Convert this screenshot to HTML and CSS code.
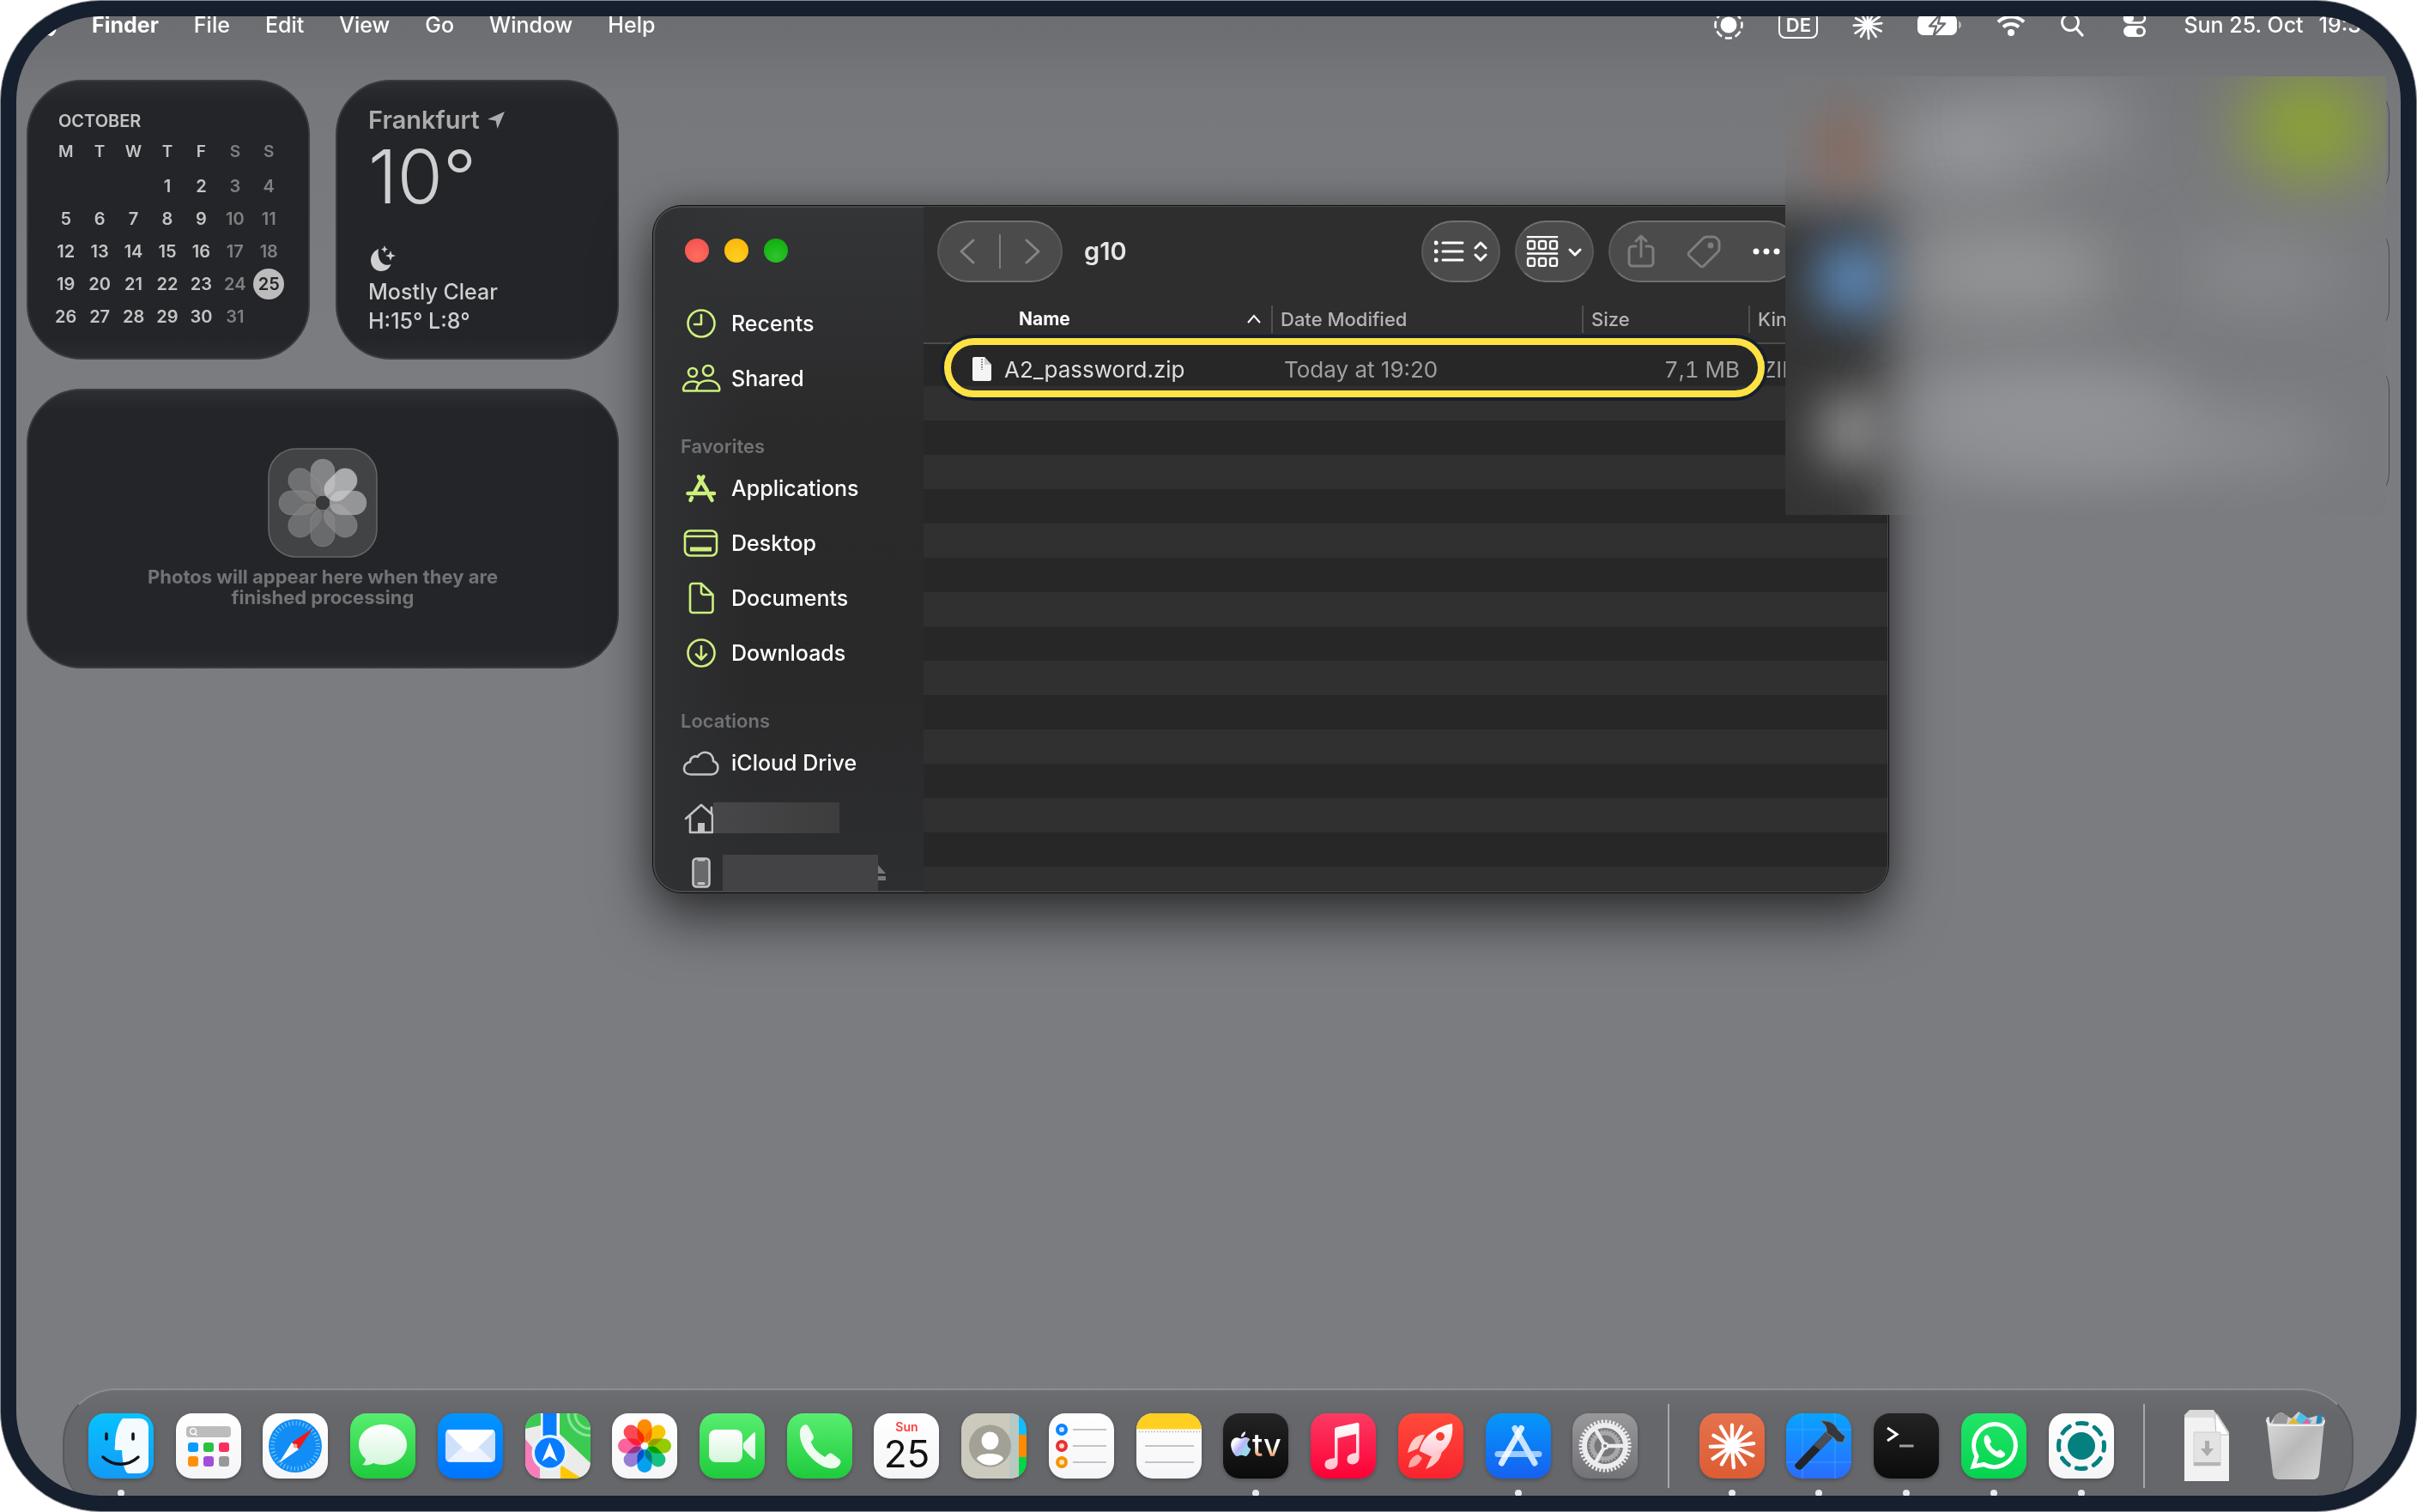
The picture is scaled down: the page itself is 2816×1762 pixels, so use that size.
FILE: index.html
```html
<!DOCTYPE html>
<html lang="en">
<head>
<meta charset="utf-8">
<title>Finder</title>
<link rel="stylesheet" href="styles.css">
</head>
<body>
<svg class="defs" aria-hidden="true">
  <defs>
    <symbol id="burst" viewBox="0 0 60 60"><path d="M30 30V4M30 30 42 6M30 30 53 14M30 30 57 27M30 30 56 42M30 30 46 53M30 30 32 57M30 30 17 53M30 30 6 46M30 30 3 31M30 30 7 17M30 30 16 6" fill="none" stroke="currentColor" stroke-width="4.6" stroke-linecap="round"/></symbol>
    <symbol id="handset" viewBox="0 0 60 60"><path d="M7 8c3-4 7-5 9-1l6 11c1 3 0 5-3 8 3 8 9 14 18 19 3-4 6-6 9-4l9 7c3 3 0 8-4 10-8 4-22-2-32-13C8 34 2 17 7 8z" fill="currentColor"/></symbol>
    <symbol id="apple" viewBox="0 0 24 30"><path d="M12.300 8.500c2-.1 3-1.500 5.500-1.400 2 .1 3.800 1 4.900 2.700-4.500 2.900-3.700 8.900.9 10.700-1 3-3.500 7.500-6 7.500-2 0-2.600-1.200-5-1.200s-3.200 1.200-5 1.200C4 28-.2 20.500.2 15.200.5 10 4 7.300 7 7.200c2.200 0 3.600 1.300 5.300 1.300zM12 6.700C11.800 3.500 14.500.6 17.500.2 17.900 3.600 15 6.700 12 6.700z" fill="currentColor"/></symbol>
    <linearGradient id="white-fade" x1="0" y1="0" x2="0" y2="1"><stop offset="0" stop-color="#fff"/><stop offset="1" stop-color="#d4f6da"/></linearGradient>
    <linearGradient id="pink-fade" x1="0" y1="0" x2="0" y2="1"><stop offset="0" stop-color="#fff"/><stop offset="1" stop-color="#ffc3cf"/></linearGradient>
    <linearGradient id="rainbow" x1="0" y1="0" x2="1" y2="1"><stop offset=".3" stop-color="#fff"/><stop offset=".55" stop-color="#b9b5f5"/><stop offset=".8" stop-color="#8fe0ea"/><stop offset="1" stop-color="#d8b4f0"/></linearGradient>
    <linearGradient id="tv-fade" x1="0" y1="0" x2="0" y2="1"><stop offset=".5" stop-color="#fff"/><stop offset=".72" stop-color="#e9c08a"/><stop offset=".8" stop-color="#f08080"/></linearGradient>
    <linearGradient id="bin" x1="0" y1="0" x2="1" y2="1"><stop offset="0" stop-color="#dcdcdc"/><stop offset=".5" stop-color="#b9b9b9"/><stop offset="1" stop-color="#d6d6d6"/></linearGradient>
    <clipPath id="tile"><rect width="76" height="76" rx="19"/></clipPath>
  </defs>
</svg>

<div class="desktop">
  <header class="menubar">
    <nav class="menus" aria-label="Menu bar">
      <button class="menu-item" aria-label="Apple"><svg width="24" height="30"><use href="#apple"/></svg></button>
      <button class="menu-item menu-app">Finder</button>
      <button class="menu-item">File</button>
      <button class="menu-item">Edit</button>
      <button class="menu-item">View</button>
      <button class="menu-item">Go</button>
      <button class="menu-item">Window</button>
      <button class="menu-item">Help</button>
    </nav>
    <div class="status">
      <svg width="36" height="36" viewBox="0 0 36 36"><circle cx="18" cy="18" r="9.500" fill="#fff"/><circle cx="18" cy="18" r="15.500" fill="none" stroke="#fff" stroke-width="2.600" stroke-dasharray="8.200 3.970" stroke-dashoffset="4.100"/></svg>
      <span class="input-source">DE</span>
      <svg width="36" height="36"><use href="#burst"/></svg>
      <svg width="52" height="28" viewBox="0 0 52 28"><rect x="0" y="2" width="46" height="24" rx="7" fill="#fff"/><path d="M48 9.500c4 1 4 8 0 9z" fill="#b9b9bb"/><path d="M27 1 14 15.500h8L18.500 27 32 12.500h-8z" fill="#fff" stroke="#6c6d70" stroke-width="2.400" stroke-linejoin="round"/></svg>
      <svg width="34" height="26" viewBox="0 0 34 26"><path d="M2 9.500a21.500 21.500 0 0 1 30 0M8 15.500a13 13 0 0 1 18 0" fill="none" stroke="#fff" stroke-width="4"/><circle cx="17" cy="22" r="4" fill="#fff"/></svg>
      <svg width="32" height="28" viewBox="0 0 32 28"><circle cx="12" cy="11" r="9.500" fill="none" stroke="#fff" stroke-width="2.800"/><path d="m19 18 7 8" stroke="#fff" stroke-width="3.200" stroke-linecap="round"/></svg>
      <svg width="32" height="30" viewBox="0 0 32 30"><rect x="3" y="1.500" width="24" height="11" rx="5.500" fill="none" stroke="#fff" stroke-width="2.600"/><circle cx="9" cy="7" r="5" fill="#fff"/><rect x="2" y="16" width="26" height="13" rx="6.500" fill="#fff"/><circle cx="21" cy="22.500" r="4" fill="#6f7073"/></svg>
      <time class="clock"><span>Sun 25. Oct</span><span>19:3</span></time>
    </div>
  </header>

  <main class="space">
    <section class="widgets" aria-label="Widgets">
      <article class="widget calendar">
        <table>
          <caption>OCTOBER</caption>
          <thead><tr><th>M</th><th>T</th><th>W</th><th>T</th><th>F</th><th class="off">S</th><th class="off">S</th></tr></thead>
          <tbody>
            <tr><td></td><td></td><td></td><td>1</td><td>2</td><td class="off">3</td><td class="off">4</td></tr>
            <tr><td>5</td><td>6</td><td>7</td><td>8</td><td>9</td><td class="off">10</td><td class="off">11</td></tr>
            <tr><td>12</td><td>13</td><td>14</td><td>15</td><td>16</td><td class="off">17</td><td class="off">18</td></tr>
            <tr><td>19</td><td>20</td><td>21</td><td>22</td><td>23</td><td class="off">24</td><td><span class="today">25</span></td></tr>
            <tr><td>26</td><td>27</td><td>28</td><td>29</td><td>30</td><td class="off">31</td><td></td></tr>
          </tbody>
        </table>
      </article>
      <article class="widget weather">
        <h2>Frankfurt <svg width="22" height="22" viewBox="0 0 22 22"><path d="M21 1 12.500 21l-1.800-9.200L1 10z" fill="currentColor"/></svg></h2>
        <p class="temp">10°</p>
        <svg class="moon" width="32" height="32" viewBox="0 0 32 32"><path d="M10 5C4 8 1 13 1 18c0 7 5 13 12 13 5 0 10-3 11.500-8-3 1.500-8 1-11-2C10 17 9 11 10 5z" fill="currentColor"/><path d="m17 1 1.200 3.300L21 5.500l-2.800 1.200L17 10l-1.200-3.300L13 5.500l2.800-1.200zM24 7l1.600 4.400L30 13l-4.400 1.600L24 19l-1.600-4.400L18 13l4.400-1.600z" fill="currentColor"/></svg>
        <p>Mostly Clear</p>
        <p>H:15° L:8°</p>
      </article>
      <article class="widget photos">
        <svg class="photos-icon" width="128" height="128" viewBox="0 0 128 128">
          <rect x="1" y="1" width="126" height="126" rx="32" fill="#424345" stroke="#66676a" stroke-width="1.500"/>
          <g stroke="#a0a0a0" stroke-opacity=".35">
            <rect x="50" y="13" width="28" height="43" rx="14" fill="#a0a0a2" fill-opacity=".7"/>
            <rect x="50" y="13" width="28" height="43" rx="14" fill="#838385" fill-opacity=".7" transform="rotate(315 64 64)"/>
            <rect x="50" y="13" width="28" height="43" rx="14" fill="#838385" fill-opacity=".7" transform="rotate(270 64 64)"/>
            <rect x="50" y="13" width="28" height="43" rx="14" fill="#808082" fill-opacity=".7" transform="rotate(225 64 64)"/>
            <rect x="50" y="13" width="28" height="43" rx="14" fill="#7a7a7c" fill-opacity=".7" transform="rotate(180 64 64)"/>
            <rect x="50" y="13" width="28" height="43" rx="14" fill="#8c8c8e" fill-opacity=".7" transform="rotate(135 64 64)"/>
            <rect x="50" y="13" width="28" height="43" rx="14" fill="#b0b0b2" fill-opacity=".75" transform="rotate(90 64 64)"/>
            <rect x="50" y="13" width="28" height="43" rx="14" fill="#cdcdcf" fill-opacity=".75" transform="rotate(45 64 64)"/>
          </g>
          <circle cx="64" cy="64" r="8" fill="#38393b"/>
        </svg>
        <p>Photos will appear here when they are finished processing</p>
      </article>
    </section>
  </main>

  <section class="window" aria-label="g10">
    <aside class="sidebar">
      <div class="lights">
        <button class="light close" aria-label="Close"></button>
        <button class="light minimise" aria-label="Minimise"></button>
        <button class="light zoom" aria-label="Zoom"></button>
      </div>
      <a class="place" href="#recents"><svg viewBox="0 0 48 40"><circle cx="24" cy="20" r="15.500"/><path d="M24 10v11h-8"/></svg>Recents</a>
      <a class="place" href="#shared"><svg viewBox="0 0 48 40"><circle cx="32" cy="11" r="6"/><circle cx="14" cy="13" r="5"/><path d="M20 34.500c-3 0-1.500-12 12-12s15 12 12 12zM17.500 34.500h-13c-3 0-1.500-11 9.500-11 4 0 6 1 7.500 2.500"/></svg>Shared</a>
      <h3 class="group">Favorites</h3>
      <a class="place" href="#applications"><svg viewBox="0 0 48 40"><path stroke-width="4.500" d="M21 6.500 31 23M26.500 6.500 16 25M8.500 26h20M34.500 26H39M31 24l5.500 10M13 31l-1.500 3"/></svg>Applications</a>
      <a class="place" href="#desktop"><svg viewBox="0 0 48 40"><rect x="5" y="5.500" width="37" height="29" rx="6"/><path d="M5 12h37"/><path d="M11 27h25" stroke-width="5" stroke-linecap="butt"/></svg>Desktop</a>
      <a class="place" href="#documents"><svg viewBox="0 0 48 40"><path d="M14 3h10l13.500 13v18a3 3 0 0 1-3 3H14a3 3 0 0 1-3-3V6a3 3 0 0 1 3-3zM24 3v10a3 3 0 0 0 3 3h10"/></svg>Documents</a>
      <a class="place" href="#downloads"><svg viewBox="0 0 48 40"><circle cx="24" cy="20" r="15.500"/><path d="M24 12v15M18 21.500l6 6 6-6"/></svg>Downloads</a>
      <h3 class="group">Locations</h3>
      <a class="place place-device" href="#icloud"><svg viewBox="0 0 48 40"><path d="M12 33.500C1 33.500 2 20 11 19c0-5 5-8 9-6 4-8 18-7 18 5 8 3 7 15-2 15.500z"/></svg>iCloud Drive</a>
      <a class="place place-device" href="#home" aria-label="Home"><svg viewBox="0 0 48 40"><path d="M6 21 24 5l18 16M11 18v19h26V18M36 15V8"/><path d="M20 26h8v11h-8z" fill="currentColor" stroke="none"/></svg><span class="mask mask-home"></span></a>
      <a class="place place-device" href="#phone" aria-label="Phone"><svg viewBox="0 0 48 40"><rect x="14.500" y="3.500" width="19" height="33" rx="4" fill="#68696b"/><path d="M21 5h6M21 32.500h6" stroke-width="3"/></svg><span class="mask mask-phone"></span><svg class="eject" viewBox="0 0 9 18"><path d="M0 0 9 10H0zM0 13h9v5H0z"/></svg></a>
    </aside>

    <div class="content">
      <div class="toolbar">
        <div class="pill history">
          <button aria-label="Back"><svg width="18" height="30" viewBox="0 0 18 30"><path d="M16 2 2 15l14 13"/></svg></button>
          <span class="rule"></span>
          <button aria-label="Forward"><svg width="18" height="30" viewBox="0 0 18 30"><path d="m2 2 14 13L2 28"/></svg></button>
        </div>
        <h1>g10</h1>
        <button class="pill view" aria-label="View as list"><svg width="62" height="36" viewBox="0 0 62 36"><path d="M10 8h23M10 18h23M10 28h23"/><path d="M2 8h.1M2 18h.1M2 28h.1" stroke-width="5"/><path d="m48 14 6-6 6 6M48 22l6 6 6-6"/></svg></button>
        <button class="pill view" aria-label="Group"><svg width="66" height="36" viewBox="0 0 66 36"><path d="M2 1h34M2 20.500h34" stroke-width="2.600"/><g stroke-width="2.400"><rect x="2" y="6" width="8" height="9" rx="2"/><rect x="15" y="6" width="8" height="9" rx="2"/><rect x="28" y="6" width="8" height="9" rx="2"/><rect x="2" y="26" width="8" height="9" rx="2"/><rect x="15" y="26" width="8" height="9" rx="2"/><rect x="28" y="26" width="8" height="9" rx="2"/></g><path d="m51 16 6 6 6-6"/></svg></button>
        <div class="pill actions">
          <button class="dim" aria-label="Share"><svg width="32" height="40" viewBox="0 0 32 40"><path d="M16 26V3M10 8l6-6 6 6M10 14H6a4 4 0 0 0-4 4v15a4 4 0 0 0 4 4h20a4 4 0 0 0 4-4V18a4 4 0 0 0-4-4h-4"/></svg></button>
          <button class="dim" aria-label="Tags"><svg width="40" height="40" viewBox="0 0 40 40"><path d="M24 3h8c2 0 6 4 6 6v8c0 2-1 3-2 4L20 37c-1 1-3 1-4 0L3 25c-1-1-1-3 0-4L19 5c1-1 3-2 5-2z"/><circle cx="28" cy="13" r="2" fill="currentColor"/></svg></button>
          <button aria-label="More"><svg width="32" height="8" viewBox="0 0 32 8"><g fill="currentColor" stroke="none"><circle cx="4" cy="4" r="3.500"/><circle cx="16" cy="4" r="3.500"/><circle cx="28" cy="4" r="3.500"/></g></svg></button>
        </div>
      </div>
      <table class="files">
        <colgroup><col class="col-name"><col class="col-date"><col class="col-size"><col></colgroup>
        <thead><tr>
          <th class="name"><div><span>Name</span><svg width="18" height="12" viewBox="0 0 18 12"><path d="m2 10 7-8 7 8"/></svg></div></th>
          <th><div>Date Modified</div></th>
          <th><div>Size</div></th>
          <th><div>Kind</div></th>
        </tr></thead>
        <tbody><tr>
          <td class="file"><div><svg width="24" height="30" viewBox="0 0 24 30"><path d="M3 1h12l8 9v17a2 2 0 0 1-2 2H3a2 2 0 0 1-2-2V3a2 2 0 0 1 2-2z" fill="#f4f4f4"/><path d="M15 1v9h8z" fill="#cfcfcf"/><path d="M12 3v13" stroke="#999" stroke-width="2" stroke-dasharray="2 1"/></svg>A2_password.zip</div></td>
          <td class="date">Today at 19:20</td>
          <td class="size">7,1 MB</td>
          <td class="kind">ZIP</td>
        </tr></tbody>
      </table>
    </div>
    <div class="highlight"></div>
  </section>

  <section class="notices" aria-label="Notifications">
    <div class="notice"></div>
    <div class="notice"></div>
    <div class="notice notice-tall"></div>
    <div class="haze"><i class="b-dark"></i><i class="b-brown"></i><i class="b-text1"></i><i class="b-text1b"></i><i class="b-green"></i><i class="b-blue"></i><i class="b-text2"></i><i class="b-text2b"></i><i class="b-gray"></i><i class="b-text3"></i><i class="b-text4"></i></div>
  </section>

  <nav class="dock" aria-label="Dock">
    <button class="app finder running" aria-label="Finder"><svg viewBox="0 0 76 76"><path d="M40 6h20a10 10 0 0 1 10 10v44a10 10 0 0 1-10 10H46c-4-3-6-10-7-27h-6c-2 0-3-1-2-5 0-14 3-25 9-32z" fill="#f4fbff"/><path d="M21 24v6M52 24v6" stroke="#10131a" stroke-width="3.600" stroke-linecap="round"/><path d="M17 51c12 11 29 11 41 0" fill="none" stroke="#10131a" stroke-width="3.400" stroke-linecap="round"/></svg></button>
    <button class="app paper" aria-label="Apps"><svg viewBox="0 0 76 76"><rect x="12" y="15" width="52" height="13" rx="4" fill="#bcbcbd"/><circle cx="20" cy="21" r="3.500" fill="none" stroke="#fff" stroke-width="1.500"/><path d="m22.500 24 2 2" stroke="#fff" stroke-width="1.500"/><rect x="14" y="34" width="12" height="11" rx="3" fill="#0a9bff"/><rect x="32" y="34" width="12" height="11" rx="3" fill="#2cc144"/><rect x="50" y="34" width="12" height="11" rx="3" fill="#fb2f5d"/><rect x="14" y="50" width="12" height="12" rx="3" fill="#ff900e"/><rect x="32" y="50" width="12" height="12" rx="3" fill="#a24fd8"/><rect x="50" y="50" width="12" height="12" rx="3" fill="#98989a"/></svg></button>
    <button class="app paper" aria-label="Safari"><svg viewBox="0 0 76 76"><circle cx="38" cy="38" r="31" fill="#128df5"/><circle cx="38" cy="38" r="26.500" fill="none" stroke="#7fd0ff" stroke-width="5" stroke-dasharray="1 3.160"/><path d="M58 18 34 34l8 8z" fill="#f01818"/><path d="m19 58 15-24 8 8z" fill="#fff"/><circle cx="38" cy="38" r="2.500" fill="#f7a0a0"/></svg></button>
    <button class="app green" aria-label="Messages"><svg viewBox="0 0 76 76"><path d="M38 13c16 0 28 10 28 23.500S54 60 38 60c-4 0-8-.7-11-2-3 2-8 3-13 2 3-2 4-5 4-7-5-4-8-10-8-16.500C10 23 22 13 38 13z" fill="url(#white-fade)"/></svg></button>
    <button class="app mail" aria-label="Mail"><svg viewBox="0 0 76 76"><rect x="9" y="19" width="58" height="38" rx="5" fill="#cfe0fb"/><path d="m11 56 20-19h14l20 19z" fill="#eef4ff"/><path d="M10 21c1-2 2-2 4-2h48c2 0 3 0 4 2L44 43c-4 3-8 3-12 0z" fill="#fff"/></svg></button>
    <button class="app maps" aria-label="Maps"><svg viewBox="0 0 76 76"><g clip-path="url(#tile)"><path d="M0 0h76v76H0z" fill="#ebebea"/><path d="M0 0h18v14L0 18zM40 0h36v58L40 24z" fill="#3ccb52"/><circle cx="76" cy="0" r="26" fill="none" stroke="#8ae498" stroke-width="3"/><circle cx="76" cy="0" r="18" fill="none" stroke="#8ae498" stroke-width="3"/><path d="M0 30 17 50v26H0z" fill="#f77cba"/><path d="M41 60 66 76H41z" fill="#fcc803"/><path d="M18 0h22v40H18z" fill="#fff"/><path d="M20.500 0h16v40h-16z" fill="#0a7cff"/></g><circle cx="28.500" cy="46" r="21" fill="#e8f3fb"/><circle cx="28.500" cy="46" r="17.500" fill="#087bff"/><path d="m28.500 34 9 22-9-6-9 6z" fill="#fff"/></svg></button>
    <button class="app paper" aria-label="Photos"><svg viewBox="0 0 76 76"><g class="petals"><rect x="29.500" y="7" width="17" height="27" rx="8.500" fill="#ff8c00"/><rect x="29.500" y="7" width="17" height="27" rx="8.500" fill="#fcc800" transform="rotate(45 38 38)"/><rect x="29.500" y="7" width="17" height="27" rx="8.500" fill="#98cf00" transform="rotate(90 38 38)"/><rect x="29.500" y="7" width="17" height="27" rx="8.500" fill="#14c785" transform="rotate(135 38 38)"/><rect x="29.500" y="7" width="17" height="27" rx="8.500" fill="#05a5f5" transform="rotate(180 38 38)"/><rect x="29.500" y="7" width="17" height="27" rx="8.500" fill="#9a80dd" transform="rotate(225 38 38)"/><rect x="29.500" y="7" width="17" height="27" rx="8.500" fill="#ff65a0" transform="rotate(270 38 38)"/><rect x="29.500" y="7" width="17" height="27" rx="8.500" fill="#ff4a55" transform="rotate(315 38 38)"/></g></svg></button>
    <button class="app green" aria-label="FaceTime"><svg viewBox="0 0 76 76"><rect x="11" y="19" width="39" height="38" rx="8" fill="url(#white-fade)"/><path d="M51 35c4-4 8-9 12-12 1-1 2-1 2 0v30c0 1-1 1-2 0-4-3-8-8-12-12z" fill="url(#white-fade)"/></svg></button>
    <button class="app green phone" aria-label="Phone"><svg viewBox="0 0 76 76"><use href="#handset" x="10" y="9" width="56" height="56"/></svg></button>
    <button class="app paper cal" aria-label="Calendar"><span class="cal-day">Sun</span><span class="cal-date">25</span></button>
    <button class="app" aria-label="Contacts"><svg viewBox="0 0 76 76"><g clip-path="url(#tile)"><path d="M0 0h67v76H0z" fill="#cbcabd"/><path d="M67 0h9v25h-9z" fill="#10bdff"/><path d="M67 25h9v26h-9z" fill="#ff8a00"/><path d="M67 51h9v25h-9z" fill="#04d648"/><path d="M56 0h11v76H56z" fill="#b9c8c2"/></g><circle cx="33.500" cy="38" r="24.500" fill="#a3a195"/><ellipse cx="33.500" cy="32" rx="10" ry="10.500" fill="#fff"/><path d="M18 53c2-8 29-8 31 0-8 10-23 10-31 0z" fill="#fff"/></svg></button>
    <button class="app paper" aria-label="Reminders"><svg viewBox="0 0 76 76"><g stroke-width="4"><circle cx="15" cy="19" r="5" fill="#cfe5ff" stroke="#0a84ff"/><circle cx="15" cy="38" r="5" fill="#fad2d2" stroke="#e83030"/><circle cx="15" cy="57" r="5" fill="#fde3b5" stroke="#f59300"/></g><path d="M28 19h39M28 38h39M28 57h39" stroke="#c4c4c6" stroke-width="2"/></svg></button>
    <button class="app paper" aria-label="Notes"><svg viewBox="0 0 76 76"><path d="M0 18.500h76V0H0z" fill="#ffd021" clip-path="url(#tile)"/><path d="M3 21.500h72" stroke="#b0b0b0" stroke-width="1.500" stroke-dasharray="1.500 2"/><path d="M10 38h57M10 57h57" stroke="#c4c4c6" stroke-width="2"/></svg></button>
    <button class="app black running" aria-label="TV"><svg viewBox="0 0 76 76"><path transform="translate(9 21)" d="M12 8.500c2-.1 3-1.500 5.500-1.400 2 .1 3.800 1 4.900 2.700-4.500 2.900-3.700 8.900.9 10.700-1 3-3.500 8.500-6 8.500-2 0-2.600-1.200-5-1.200S9.300 29 7.500 29C4 29-.2 20.500.2 15.200.5 10 4 7.300 7 7.200c2.200 0 3.600 1.300 5 1.300zM12 6.700C11.800 3.500 14.500.6 17 .2c.4 3.400-2 6.500-5 6.500z" fill="url(#rainbow)"/><text x="34" y="50" class="tv" fill="url(#tv-fade)">tv</text></svg></button>
    <button class="app music" aria-label="Music"><svg viewBox="0 0 76 76"><path d="M28 19c0-2 1-2.500 3-3l23-5c2-.4 2.500.5 2.500 2v39c0 9-14 10-14 2 0-6 5-7 10.500-8V24l-21.500 5v29c0 9-15 10-15 2 0-6 5-7 11.500-8z" fill="url(#pink-fade)"/></svg></button>
    <button class="app rocket" aria-label="Rocket"><svg viewBox="0 0 76 76"><path d="M63 12c2 18-5 30-21 40L25 44c2-16 20-29 38-32z" fill="url(#pink-fade)"/><circle cx="49" cy="27" r="5" fill="#f4402f"/><path d="M31 25c-12 0-17 8-20 21l12-5zM51 41c0 11-6 19-19 24l6-13z" fill="#ffc9c6"/><path d="M23 48c-6 2-10 6-11 15 5 0 12-2 16-11z" fill="#ffa9a5"/></svg></button>
    <button class="app store running" aria-label="App Store"><svg viewBox="0 0 76 76"><g fill="none" stroke-linecap="round" stroke-width="7"><path d="M14 47.500h48" stroke="#9dcbff"/><path d="M34 17.500 57 58" stroke="#c8e2ff"/><path d="M41.500 17.500 18.500 58" stroke="#fff" stroke-opacity=".85"/></g></svg></button>
    <button class="app settings" aria-label="System Settings"><svg viewBox="0 0 76 76"><circle cx="38" cy="38" r="28.500" fill="none" stroke="#efeff1" stroke-width="4" stroke-dasharray="2.300 2.175"/><circle cx="38" cy="38" r="24" fill="#77777b" stroke="#ececee" stroke-width="6"/><circle cx="38" cy="38" r="15" fill="none" stroke="#a9a9ac" stroke-width="5"/><circle cx="38" cy="38" r="18" fill="none" stroke="#a9a9ac" stroke-width="2.500" stroke-dasharray="1.800 1.970"/><path d="M38 38h23M38 38 26.500 18M38 38 26.500 58" stroke="#ececee" stroke-width="4.500"/><circle cx="38" cy="38" r="4.500" fill="#ececee"/><circle cx="38" cy="38" r="2" fill="#77777b"/></svg></button>
    <span class="dock-rule"></span>
    <button class="app claude running" aria-label="Claude"><svg viewBox="0 0 76 76"><use href="#burst" x="10" y="10" width="56" height="56"/></svg></button>
    <button class="app xcode running" aria-label="Xcode"><svg viewBox="0 0 76 76"><path d="M0 19h76M0 57h76M19 0v76M57 0v76" stroke="#5fb4ff" stroke-opacity=".5"/><path d="m46 22 8 6-36 37c-3 2-8-1-8-5z" fill="#23252b"/><path d="m46 22 8 6-14 15-8-6z" fill="#4b4e56"/><path d="M40 9c11-1 17 3 20 10l5 5 4 3-3 7-7-1-3-4-9-6c1-6-1-10-7-14z" fill="#34373e" stroke="#767b84"/></svg></button>
    <button class="app black running" aria-label="Terminal"><svg viewBox="0 0 76 76"><path d="m16 17 11 7.500L16 32" fill="none" stroke="#fff" stroke-width="3"/><path d="M30 38h16.500" stroke="#a0a0a0" stroke-width="3"/></svg></button>
    <button class="app green whatsapp running" aria-label="WhatsApp"><svg viewBox="0 0 76 76"><path d="M38.500 12.500a25 25 0 1 1-12 47L14 62l4-12a25 25 0 0 1 20.500-37.500z" fill="none" stroke="#fff" stroke-width="5"/><use href="#handset" x="24" y="23" width="29" height="29"/></svg></button>
    <button class="app paper running" aria-label="Recorder"><svg viewBox="0 0 76 76"><circle cx="38" cy="38" r="16" fill="#04807f"/><circle cx="38" cy="38" r="26.500" fill="none" stroke="#04807f" stroke-width="5" stroke-dasharray="11 9.813" stroke-dashoffset="5.500" stroke-linecap="round"/></svg></button>
    <span class="dock-rule"></span>
    <button class="app bare" aria-label="Downloads"><svg viewBox="0 0 76 76"><path d="M17-4h28l4 6v-2l14 22v57H11V2l3-3z" fill="#dadada"/><path d="M11 5h33l19 20v54H11z" fill="#f2f2f2"/><path d="M47-1c0 12 0 22 2 26h14z" fill="#fff" stroke="#bdbdbd"/><path d="M22 22h31v39H22z" fill="#e3e3e4" stroke="#cfcfd0"/><path d="M22 57h31v4H22z" fill="#b5b5b6"/><path d="M35 32h5v9h5l-7.500 9-7.500-9h5z" fill="#ababad"/></svg></button>
    <button class="app bare" aria-label="Trash"><svg viewBox="0 0 76 76"><path d="M14 4c4-6 10-6 12-2l8 4 8-8 10 8 14-4 2 12H8z" fill="#d0d0d2"/><path d="m14 4 6-5 10 4-2 10H12z" fill="#98989b"/><path d="m36 13 8-14 14 10-6 6z" fill="#4cc0e8"/><path d="m30 12 6-7 8 8z" fill="#e8b62c"/><path d="m46 12 6-6 5 7z" fill="#ea5f9a"/><path d="M64 2h6v12h-8z" fill="#2386b8"/><path d="M5 10c-2-3 0-6 3-6 0 6 0 8 4 8h53c4 0 5-3 4-8 3 0 4 2 3 6l-6 60c-1 5-3 7-7 7H19c-4 0-6-2-7-7z" fill="url(#bin)"/><path d="M5 8c1 5 3 6 6 6h56c3 0 5-2 5-6" fill="none" stroke="#f0f0f0" stroke-width="2"/></svg></button>
  </nav>
</div>
<div class="bezel" aria-hidden="true"></div>
</body>
</html>
```
FILE: styles.css
```css
* { box-sizing: border-box; }

body {
  margin: 0;
  background: #fff;
  font-family: Inter, "Liberation Sans", sans-serif;
  font-size: 25px;
  color: #fff;
  overflow: hidden;
}

h1, h2, h3, p { margin: 0; }
button { padding: 0; border: 0; background: none; color: inherit; font: inherit; }
svg { display: block; flex: none; }
a { color: inherit; text-decoration: none; }
.defs { position: absolute; width: 0; height: 0; }

.desktop {
  position: relative;
  display: flex;
  flex-direction: column;
  min-height: 100vh;
  background: linear-gradient(#6b6c6f 0, #6f7073 50px, #77787b 110px, #7b7c80 400px, #7b7c80 100%);
}

.bezel {
  position: fixed;
  inset: 1px;
  border: 18px solid #161f2e;
  border-radius: 116px;
  box-shadow: 0 0 0 1px #8b8d92, 0 0 0 120px #fff;
  pointer-events: none;
}

/* Menu bar */
.menubar { display: flex; justify-content: space-between; height: 58px; padding: 0 65px 0 42px; font-weight: 500; }
.menus { display: flex; align-items: center; gap: 41px; }
.status { display: flex; align-items: center; gap: 40px; }
.menubar .menu-app { font-weight: 700; }
.input-source {
  width: 46px; height: 32px;
  border: 2px solid #fff; border-radius: 8px;
  font-size: 22px; font-weight: 600; line-height: 29px; text-align: center;
}
.clock { display: flex; gap: 18px; white-space: nowrap; }

/* Widgets */
.space { flex: 1; padding: 35px 31px; }
.widgets { display: grid; grid-template-columns: 330px 330px; gap: 34px 30px; }
.widget {
  height: 326px;
  border: 2px solid #3a3b3e;
  border-radius: 64px;
  background: linear-gradient(#2d2e31, #242528 24px, #242528 300px, #2a2b2e);
}
.calendar { padding: 32px 0 0 24px; }
.calendar table { width: 276px; table-layout: fixed; border-collapse: collapse; font-size: 20px; font-weight: 600; color: #c4c4c6; text-align: center; }
.calendar caption { padding-left: 11px; text-align: left; font-size: 20px; line-height: 29px; }
.calendar th, .calendar td { height: 38px; padding: 0; font-weight: 600; line-height: 36px; }
.calendar thead th { height: 42px; font-size: 19px; }
.calendar .off { color: #7f8082; }
.today { display: inline-block; width: 36px; height: 36px; border-radius: 50%; background: #bcbcbd; color: #242528; }

.weather { padding: 27px 36px; font-weight: 500; line-height: 34px; color: #cfcfd1; }
.weather h2 { display: flex; align-items: center; gap: 8px; font-size: 29px; font-weight: 600; line-height: 36px; color: #acacae; }
.temp { font-size: 86px; font-weight: 300; line-height: 96px; }
.moon { margin: 31px 0 6px 2px; }

.photos { grid-column: span 2; display: flex; flex-direction: column; align-items: center; padding-top: 67px; }
.photos p { width: 460px; margin-top: 10px; font-size: 22px; font-weight: 700; line-height: 24px; text-align: center; color: #727375; }

/* Finder window */
.window {
  position: absolute;
  left: 760px;
  top: 239px;
  display: flex;
  width: 1441px;
  height: 802px;
  border: 1px solid #0c0c0d;
  border-radius: 34px;
  background: #2e2e2e;
  box-shadow: inset 0 0 0 2px #505152, 0 32px 64px rgba(0, 0, 0, .55), 0 0 40px rgba(0, 0, 0, .25);
}
.sidebar {
  width: 315px;
  padding-left: 32px;
  overflow: hidden;
  border-radius: 33px 0 0 33px;
  background: linear-gradient(90deg, #303133, transparent 110px), linear-gradient(#343537, #2a2a2b 260px, #29292a 560px, #2d2e30);
  box-shadow: inset 2px 0 0 #48494a, inset 0 2px 0 #48494a, inset 0 -2px 0 #48494a;
}
.lights { display: flex; align-items: center; gap: 18px; height: 105px; padding: 0 0 2px 5px; }
.light { width: 28px; height: 28px; border-radius: 50%; }
.close { background: radial-gradient(circle at 50% 70%, #ff6c60, #f14e4a); }
.minimise { background: radial-gradient(circle at 50% 80%, #ffcf20, #fbb105); }
.zoom { background: radial-gradient(circle at 50% 75%, #2fc52c, #08ab0a); }
.place { display: flex; align-items: center; height: 64px; font-weight: 500; }
.place svg { width: 48px; height: 40px; margin-right: 11px; fill: none; stroke: #cdf07c; stroke-width: 2.6; stroke-linecap: round; stroke-linejoin: round; }
.place-device svg { color: #c3c3c4; stroke: #c3c3c4; }
.group { height: 64px; padding-top: 33px; font-size: 22px; font-weight: 600; line-height: 28px; color: #717273; }
.mask { background: linear-gradient(90deg, #474749, #3d3d3e); }
.mask-home { width: 147px; height: 36px; margin-left: -21px; }
.mask-phone { width: 181px; height: 42px; margin-left: -10px; background: #434345; }
.place .eject { width: 9px; height: 18px; fill: #777879; stroke: none; }

.content {
  flex: 1;
  min-width: 0;
  overflow: hidden;
  border: solid #48494a;
  border-width: 1px 1px 1px 0;
  border-radius: 0 33px 33px 0;
  background:
    linear-gradient(#2e2e2e 0 159px, #272727 159px 209px, transparent 209px),
    repeating-linear-gradient(#303030 0 40px, #272727 40px 80px) 0 209px;
}
.toolbar { display: flex; align-items: center; height: 103px; padding-left: 16px; }
.toolbar h1 { flex: 1; padding-left: 25px; font-size: 29px; font-weight: 600; color: #e6e6e6; }
.toolbar svg { fill: none; stroke: currentColor; stroke-width: 3; stroke-linecap: round; stroke-linejoin: round; }
.pill {
  display: flex;
  align-items: center;
  justify-content: center;
  height: 72px;
  border: 2px solid #707071;
  border-left-color: #5a5a5b;
  border-right-color: #5a5a5b;
  border-radius: 36px;
  background: #4b4b4c;
}
.history { width: 146px; gap: 28px; color: #858586; }
.history .rule { width: 2px; height: 40px; background: #7b7b7c; }
.view { width: 92px; margin-right: 17px; }
.actions { width: 222px; margin-right: 103px; gap: 37px; }
.actions .dim { color: #7d7d7e; }

.files { width: 100%; table-layout: fixed; border-collapse: collapse; }
.col-name { width: 405px; }
.col-date { width: 362px; }
.col-size { width: 194px; }
.files th { height: 56px; padding: 0; border-bottom: 2px solid #4c4c4d; font-size: 22px; font-weight: 500; text-align: left; color: #b4b4b5; }
.files th div { display: flex; align-items: center; justify-content: space-between; height: 32px; padding-left: 9px; border-left: 2px solid #505051; }
.files th.name { font-size: 21px; font-weight: 700; color: #fff; }
.files th.name div { padding: 0 11px 0 109px; border-color: transparent; }
.files th svg { fill: none; stroke: #fff; stroke-width: 2; }
.files td { height: 49px; padding: 10px 0 0; font-size: 26px; color: #a0a0a1; white-space: nowrap; }
.file div { display: flex; align-items: center; gap: 14px; padding-left: 56px; color: #dededf; }
.files .date { padding-left: 15px; }
.files .size { padding-right: 10px; text-align: right; font-variant-numeric: tabular-nums; }
.files .kind { padding-left: 16px; }
.highlight {
  position: absolute;
  left: 339px;
  top: 154px;
  width: 956px;
  height: 69px;
  border: 8px solid #fee244;
  border-radius: 35px;
  box-shadow: 0 0 0 4px #161f2e;
}

/* Blurred notifications */
.notices {
  position: absolute;
  right: 32px;
  top: 89px;
  display: flex;
  flex-direction: column;
  gap: 26px;
  width: 704px;
  height: 511px;
  padding-top: 10px;
}
.notice { height: 134px; border-right: 1px solid #4b4c4e; border-radius: 34px; }
.notice-tall { height: 166px; }
.haze { position: absolute; inset: 0 4px 0 0; overflow: hidden; background: linear-gradient(#76777a, #7a7b7e 120px, #7a7b7e); }
.haze i { position: absolute; border-radius: 45%; filter: blur(38px); }
.haze .b-dark { left: -120px; top: 155px; width: 240px; height: 480px; border-radius: 0; background: #353535; filter: blur(30px); }
.haze .b-brown { left: 36px; top: 40px; width: 70px; height: 90px; background: #88695d; filter: blur(28px); }
.haze .b-text1 { left: 130px; top: 30px; width: 170px; height: 100px; background: #98999d; }
.haze .b-text1b { left: 250px; top: 20px; width: 150px; height: 70px; background: #949598; }
.haze .b-green { left: 535px; top: -4px; width: 150px; height: 124px; background: #8ca334; }
.haze .b-blue { left: 34px; top: 190px; width: 88px; height: 92px; background: #5c8abb; filter: blur(28px); }
.haze .b-text2 { left: 140px; top: 180px; width: 240px; height: 96px; background: #969799; }
.haze .b-text2b { left: 460px; top: 195px; width: 190px; height: 70px; background: #8a8b8e; }
.haze .b-gray { left: 36px; top: 366px; width: 84px; height: 92px; background: #8d8d8e; filter: blur(28px); }
.haze .b-text3 { left: 140px; top: 340px; width: 330px; height: 110px; background: #96979b; }
.haze .b-text4 { left: 150px; top: 390px; width: 490px; height: 70px; background: #909195; }

/* Dock */
.dock {
  display: flex;
  justify-content: space-between;
  height: 144px;
  margin: 0 74px 0 73px;
  padding: 27px 28px 0 28px;
  border: 2px solid #58595c;
  border-top-color: #8d8e91;
  border-bottom: 0;
  border-radius: 62px;
  background: linear-gradient(#6d6e71, #66676b 30px);
}
.app {
  position: relative;
  width: 76px;
  height: 76px;
  border-radius: 19px;
  box-shadow: 0 2px 4px rgba(0, 0, 0, .25);
}
.app svg { width: 76px; height: 76px; overflow: visible; }
.running::after {
  content: "";
  position: absolute;
  left: 34px;
  top: 89px;
  width: 8px;
  height: 8px;
  border-radius: 50%;
  background: #e8e8f0;
}
.dock-rule { width: 20px; height: 98px; margin-top: -11px; background: linear-gradient(#a6a7a9, #a6a7a9) center / 2px 100% no-repeat; }
.finder { background: linear-gradient(#08c2ff, #129af5); }
.paper { background: linear-gradient(#fff, #f5f5f7); }
.green { background: linear-gradient(#58ee70, #1ecb3c); }
.mail { background: linear-gradient(#0295ff, #0074ff); }
.phone { color: #eefcf0; }
.black { background: linear-gradient(#232323, #0b0b0b); }
.music { background: linear-gradient(#fc3b63, #fd0036); }
.rocket { background: linear-gradient(#ff4b3a, #f9232e); }
.store { background: linear-gradient(#0498fb, #1660f0); }
.settings { background: linear-gradient(#98989b, #737377); }
.claude { background: linear-gradient(#e5724c, #dd5c34); }
.xcode { background: linear-gradient(#08a4ff, #2a6cff); }
.whatsapp { background: linear-gradient(#22e567, #05d350); }
.bare { box-shadow: none; }
.petals rect { mix-blend-mode: multiply; }
.tv { font-size: 36px; font-weight: 500; }
.cal { display: flex; flex-direction: column; align-items: center; padding-top: 7px; }
.cal-day { font-size: 14px; font-weight: 600; line-height: 18px; color: #fb3b3b; }
.cal-date { font-size: 44px; font-weight: 400; line-height: 44px; color: #111; }
```
